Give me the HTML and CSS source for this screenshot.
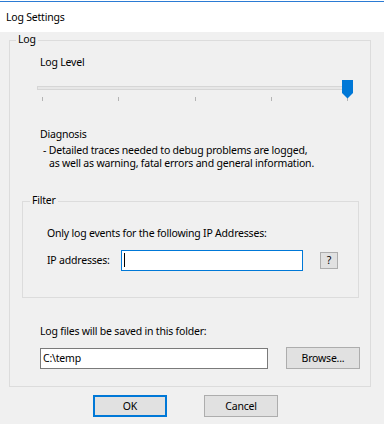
FILE: index.html
```html
<!DOCTYPE html>
<html lang="en">
<head>
  <meta charset="UTF-8">
  <title>Log Settings</title>
  <link rel="stylesheet" href="styles.css">
</head>
<body>

  <div class="topline"></div>
  <div class="titlebar">Log Settings</div>

  <div class="dialog">
    <div class="group log-group">
      <span class="group-title">Log</span>

      <div class="level-label">Log Level</div>
      <div class="slider">
        <div class="track"></div>
        <svg class="thumb" width="11" height="19" viewBox="0 0 11 19">
          <polygon points="0,0 11,0 11,13 5.5,18.5 0,13" fill="#0078d7"/>
        </svg>
        <div class="ticks">
          <span></span><span></span><span></span><span></span><span></span>
        </div>
      </div>

      <div class="diag-title">Diagnosis</div>
      <div class="diag-text">
        <div>- Detailed traces needed to debug problems are logged,</div>
        <div class="indent">as well as warning, fatal errors and general information.</div>
      </div>

      <div class="group filter-group">
        <span class="group-title">Filter</span>
        <div class="filter-label">Only log events for the following IP Addresses:</div>
        <div class="ip-row">
          <label for="ip">IP addresses:</label>
          <span class="caret-wrap"><input type="text" id="ip" class="field ip-field"></span>
          <button type="button" class="btn help-btn">?</button>
        </div>
      </div>

      <div class="folder-label">Log files will be saved in this folder:</div>
      <div class="folder-row">
        <input type="text" class="field folder-field" value="C:\temp">
        <button type="button" class="btn browse-btn">Browse...</button>
      </div>
    </div>

    <div class="actions">
      <button type="button" class="btn ok-btn">OK</button>
      <button type="button" class="btn">Cancel</button>
    </div>
  </div>

</body>
</html>
```

FILE: styles.css
```css
body {
  margin: 0;
  font-family: "Noto Sans", sans-serif;
  font-size: 10.5px;
  letter-spacing: -0.2px;
  line-height: 15px;
  color: #000;
  background-color: #f0f0f0;
  width: 384px;
  height: 424px;
  overflow: hidden;
  white-space: nowrap;
}

.topline {
  height: 1px;
  background: #fff;
  border-bottom: 1px solid #2b7bd4;
}

.titlebar {
  height: 30px;
  background: #fff;
  padding-left: 6px;
  display: flex;
  align-items: center;
}

.dialog {
  padding: 8px 13px 0 9px;
}

.group {
  position: relative;
  border: 1px solid #dcdcdc;
}

.group-title {
  position: absolute;
  top: -9px;
  left: 6px;
  padding: 0 2px;
  background: #f0f0f0;
}

.log-group {
  height: 345px;
  padding-left: 30px;
}

.level-label {
  margin-top: 14px;
}

.slider {
  position: relative;
  margin: 10px 0 0 -3px;
  width: 316px;
  height: 24px;
}

.track {
  position: relative;
  top: 6px;
  width: 311px;
  height: 2px;
  background: #e7e7e7;
  border: 1px solid #d6d6d6;
}

.thumb {
  position: absolute;
  left: 305px;
  top: 0;
}

.ticks {
  display: flex;
  justify-content: space-between;
  width: 306px;
  margin: 13px 0 0 5px;
}

.ticks span {
  width: 1px;
  height: 4px;
  background: #b4b4b4;
}

.diag-title {
  margin-top: 23px;
}

.diag-text {
  margin-top: 2px;
  padding-left: 3px;
  line-height: 13px;
}

.diag-text .indent {
  padding-left: 6px;
}

.filter-group {
  margin: 31px 0 0 -18px;
  width: 335px;
  height: 95px;
}

.filter-group .group-title {
  left: 7px;
}

.filter-label {
  margin: 24px 0 0 24px;
}

.ip-row {
  display: flex;
  align-items: center;
  margin: 9px 0 0 24px;
}

.ip-row label {
  width: 74px;
}

.caret-wrap {
  position: relative;
  display: flex;
}

.caret-wrap::after {
  content: "";
  position: absolute;
  left: 3px;
  top: 3px;
  width: 1px;
  height: 14px;
  background: #000;
}

.field {
  box-sizing: border-box;
  height: 21px;
  margin: 0;
  padding: 0 5px;
  background: #fff;
  font: inherit;
  letter-spacing: inherit;
  outline: none;
}

.ip-field {
  width: 182px;
  border: 1px solid #0078d7;
}

.folder-field {
  width: 228px;
  border: 1px solid #7a7a7a;
  padding-left: 2px;
}

.btn {
  box-sizing: border-box;
  width: 74px;
  height: 22px;
  margin: 0;
  padding: 0;
  background: #e1e1e1;
  border: 1px solid #adadad;
  font: inherit;
  letter-spacing: inherit;
  color: #000;
}

.help-btn {
  width: 18px;
  height: 17px;
  margin-left: 17px;
}

.folder-label {
  margin-top: 26px;
}

.folder-row {
  display: flex;
  align-items: center;
  margin-top: 8px;
}

.browse-btn {
  margin-left: 18px;
}

.actions {
  display: flex;
  gap: 37px;
  margin: 8px 0 0 84px;
}

.ok-btn {
  border: 2px solid #0078d7;
}
```
